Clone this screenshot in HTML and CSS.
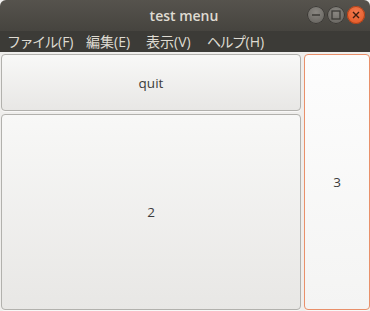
FILE: index.html
```html
<!DOCTYPE html>
<html>
<head>
<meta charset="utf-8">
<link rel="stylesheet" href="styles.css">
</head>
<body>
<div class="window">
  <div class="titlebar">
    <span class="title">test menu</span>
    <div class="controls">
      <span class="ctl ctl-min"><svg width="18" height="18" viewBox="0 0 18 18"><line x1="5" y1="9" x2="13" y2="9" stroke="#3c3b37" stroke-width="1.5"/></svg></span>
      <span class="ctl ctl-max"><svg width="18" height="18" viewBox="0 0 18 18"><rect x="5" y="5" width="8" height="8" fill="none" stroke="#3c3b37" stroke-width="1.3"/></svg></span>
      <span class="ctl ctl-close"><svg width="18" height="18" viewBox="0 0 18 18"><path d="M6 6L12 12M12 6L6 12" stroke="#3c1e10" stroke-width="1.4"/></svg></span>
    </div>
  </div>
  <div class="menubar">
    <span class="menu m1"><span class="kana">ファイル</span>(F)</span>
    <span class="menu m2">編集(E)</span>
    <span class="menu m3">表示(V)</span>
    <span class="menu m4"><span class="kana">ヘルプ</span>(H)</span>
  </div>
  <div class="content">
    <button class="btn btn-quit">quit</button>
    <button class="btn btn-two">2</button>
    <button class="btn btn-three">3</button>
  </div>
</div>
</body>
</html>
```

FILE: styles.css
```css
html, body {
  margin: 0;
  padding: 0;
  background: #f2f1f0;
}
.window {
  width: 370px;
  height: 311px;
  display: flex;
  flex-direction: column;
  overflow: hidden;
  font-family: "Open Sans", "Noto Sans CJK JP", sans-serif;
}
.titlebar {
  height: 31px;
  background: linear-gradient(#56534d, #46443f);
  border-radius: 6px 6px 0 0;
  display: flex;
  align-items: center;
  justify-content: center;
  position: relative;
  flex: none;
}
.title {
  color: #dfdbd2;
  font-size: 14px;
  font-weight: 600;
  margin-left: -2px;
  margin-top: -1px;
}
.controls {
  position: absolute;
  right: 5px;
  top: 6px;
  display: flex;
  gap: 2px;
}
.ctl {
  width: 18px;
  height: 18px;
  border-radius: 50%;
  display: block;
}
.ctl svg { display: block; }
.ctl-min, .ctl-max {
  background: radial-gradient(circle at 50% 35%, #8a8782, #5f5d58);
  box-shadow: inset 0 0 0 1px #3a3834;
}
.ctl-close {
  background: radial-gradient(circle at 50% 35%, #f37a4f, #e0531f);
  box-shadow: inset 0 0 0 1px #a8401a;
}
.menubar {
  height: 21px;
  background: #3c3b37;
  display: flex;
  align-items: center;
  flex: none;
  padding-left: 7px;
}
.menu {
  color: #dfdbd2;
  font-family: "Open Sans", "Noto Sans CJK JP", sans-serif;
  font-size: 14px;
  line-height: 21px;
  white-space: nowrap;
}
.kana { letter-spacing: -1.5px; margin-right: 1px; }
.m1 { width: 79px; }
.m2 { width: 60px; }
.m3 { width: 61px; }
.content {
  flex: 1;
  display: grid;
  grid-template-columns: 300px 66px;
  grid-template-rows: 57px 1fr;
  column-gap: 3px;
  row-gap: 3px;
  padding: 2px 0 1px 1px;
  background: #efeeec;
}
.btn {
  margin: 0;
  font-family: "Open Sans", sans-serif;
  font-size: 13.5px;
  color: #3c3c3c;
  border: 1px solid #b2b1ad;
  border-radius: 4px;
  background: linear-gradient(#f8f8f7, #e8e7e5);
  box-shadow: 0 1px 0 rgba(255,255,255,0.6);
  padding: 0;
}
.btn-quit { grid-column: 1; grid-row: 1; }
.btn-two { grid-column: 1; grid-row: 2; }
.btn-three {
  grid-column: 2;
  grid-row: 1 / 3;
  border-color: #e9906a;
  background: linear-gradient(#fdfdfd, #f4f4f3);
}
```
